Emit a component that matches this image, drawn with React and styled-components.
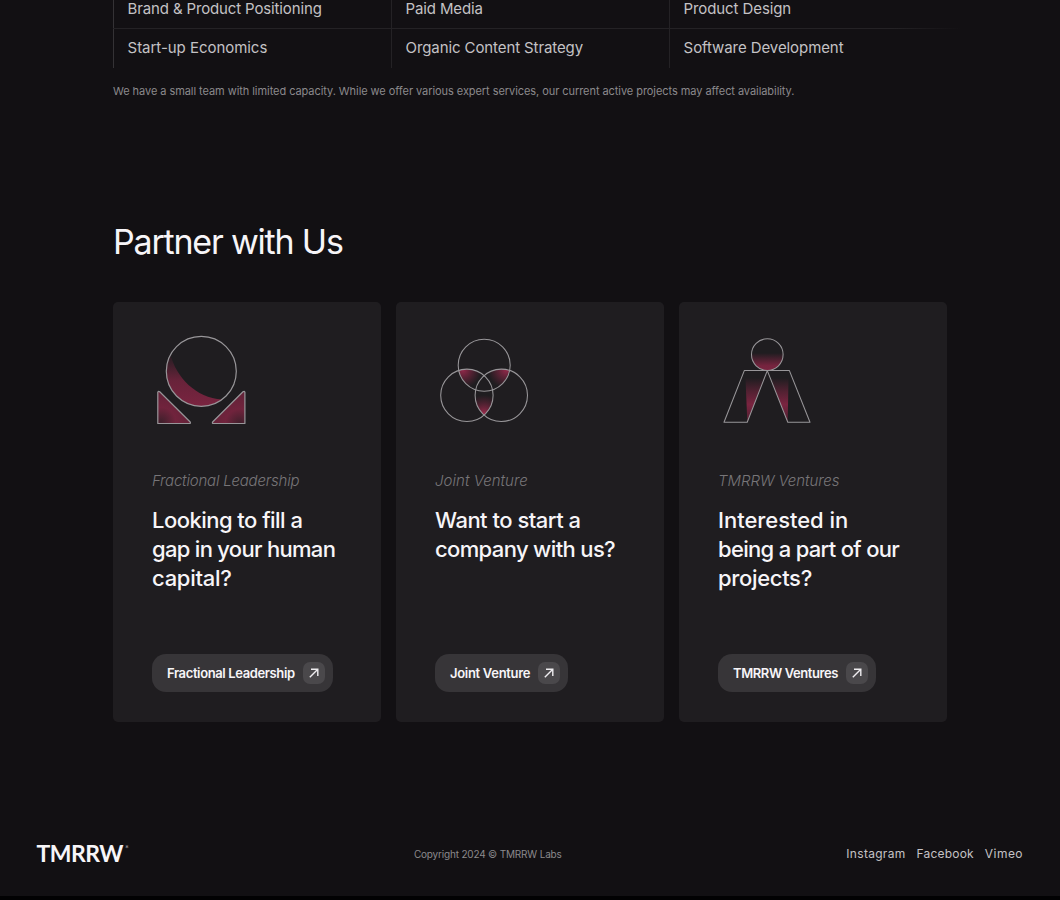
import React from "react";
import styled, { createGlobalStyle, css } from "styled-components";

const colors = {
  background: "#121013",
  card: "#1f1d20",
  button: "#373538",
  buttonIcon: "#4a484b",
  line: "#242225",
  white: "#f7f5f8",
  text: "#c4c2c5",
  muted: "#8b898c",
  faded: "#777578",
  stroke: "#989699",
  red: "#7a2440",
};

const services = [
  [
    { name: "Brand & Product Positioning", track: -0.14 },
    { name: "Paid Media", track: -0.14 },
    { name: "Product Design", track: -0.1 },
  ],
  [
    { name: "Start-up Economics", track: -0.04 },
    { name: "Organic Content Strategy", track: -0.1 },
    { name: "Software Development", track: -0.08 },
  ],
];

const OmegaIcon = () => (
  <IconSvg viewBox="0 0 98 96">
    <defs>
      <linearGradient id="moon" x1="0" y1="0" x2="0" y2="1">
        <stop offset="0" stopColor={colors.red} stopOpacity="0.05" />
        <stop offset="0.5" stopColor={colors.red} stopOpacity="0.8" />
        <stop offset="1" stopColor={colors.red} />
      </linearGradient>
      <radialGradient id="wedgeLeft" cx="0.1" cy="0.95" r="0.9">
        <stop offset="0" stopColor={colors.red} stopOpacity="0.35" />
        <stop offset="0.5" stopColor={colors.red} stopOpacity="0.9" />
        <stop offset="1" stopColor={colors.red} stopOpacity="0.75" />
      </radialGradient>
      <radialGradient id="wedgeRight" cx="0.85" cy="1" r="0.9">
        <stop offset="0" stopColor={colors.red} stopOpacity="0.35" />
        <stop offset="0.5" stopColor={colors.red} stopOpacity="0.9" />
        <stop offset="1" stopColor={colors.red} stopOpacity="0.75" />
      </radialGradient>
    </defs>
    <path d="M18.5 22.5A35 35 0 0 0 70 67.5C44 66 24 45 18.5 22.5Z" fill="url(#moon)" />
    <g stroke={colors.stroke} strokeWidth="1.2" strokeLinejoin="round">
      <circle cx="49.3" cy="39.3" r="35" fill="none" />
      <path d="M5.8 60.2Q6.3 58.6 7.7 59.8L38.2 90Q39 91.5 37.3 91.5H5.8Z" fill="url(#wedgeLeft)" />
      <path d="M92.9 60.2Q92.4 58.6 91 59.8L60.6 90Q59.8 91.5 61.5 91.5H92.9Z" fill="url(#wedgeRight)" />
    </g>
  </IconSvg>
);

const VennIcon = () => (
  <IconSvg viewBox="0 0 98 96">
    <defs>
      <clipPath id="topCircle">
        <circle cx="49.2" cy="33.2" r="26" />
      </clipPath>
      <clipPath id="leftCircle">
        <circle cx="31.9" cy="63.3" r="26.2" />
      </clipPath>
      <radialGradient id="glowLeft" gradientUnits="userSpaceOnUse" cx="28" cy="38" r="18">
        <stop offset="0" stopColor="#92284a" />
        <stop offset="1" stopColor={colors.red} stopOpacity="0" />
      </radialGradient>
      <radialGradient id="glowRight" gradientUnits="userSpaceOnUse" cx="71" cy="38" r="18">
        <stop offset="0" stopColor="#92284a" />
        <stop offset="1" stopColor={colors.red} stopOpacity="0" />
      </radialGradient>
      <radialGradient id="glowBottom" gradientUnits="userSpaceOnUse" cx="49" cy="82" r="19">
        <stop offset="0" stopColor="#9c2a4c" />
        <stop offset="1" stopColor={colors.red} stopOpacity="0" />
      </radialGradient>
    </defs>
    <circle cx="31.9" cy="63.3" r="26.2" fill="url(#glowLeft)" clipPath="url(#topCircle)" />
    <circle cx="66.3" cy="63.3" r="26.2" fill="url(#glowRight)" clipPath="url(#topCircle)" />
    <circle cx="66.3" cy="63.3" r="26.2" fill="url(#glowBottom)" clipPath="url(#leftCircle)" />
    <g fill="none" stroke={colors.stroke} strokeWidth="1.05">
      <circle cx="49.2" cy="33.2" r="26" />
      <circle cx="31.9" cy="63.3" r="26.2" />
      <circle cx="66.3" cy="63.3" r="26.2" />
    </g>
  </IconSvg>
);

const FigureIcon = () => (
  <IconSvg viewBox="0 0 98 96">
    <defs>
      <linearGradient id="head" x1="0" y1="0" x2="0" y2="1">
        <stop offset="0.45" stopColor={colors.red} stopOpacity="0" />
        <stop offset="0.85" stopColor={colors.red} stopOpacity="0.95" />
        <stop offset="1" stopColor={colors.red} />
      </linearGradient>
      <linearGradient id="legs" x1="0" y1="0" x2="0" y2="1">
        <stop offset="0" stopColor={colors.red} stopOpacity="0" />
        <stop offset="0.3" stopColor={colors.red} stopOpacity="0.55" />
        <stop offset="0.6" stopColor={colors.red} />
        <stop offset="1" stopColor={colors.red} stopOpacity="0.5" />
      </linearGradient>
    </defs>
    <circle cx="49.3" cy="22.6" r="15.8" fill="url(#head)" />
    <path d="M27.5 46H46.2L29.3 90Z" fill="url(#legs)" />
    <path d="M52.4 46H70.5L69.7 90Z" fill="url(#legs)" />
    <g fill="none" stroke={colors.stroke} strokeWidth="1.05" strokeLinejoin="round">
      <circle cx="49.3" cy="22.6" r="15.8" />
      <path d="M26.4 38.4H71.3L92 90.2H69.8L49.3 38.6L29.2 90.2H6Z" />
    </g>
  </IconSvg>
);

const ArrowIcon = () => (
  <svg width="10" height="10" viewBox="0 0 10 10" fill="none" stroke="#eeecef" strokeWidth="1.4">
    <path d="M0.8 9.2L8.8 1.2M2 1.2H8.8V8" />
  </svg>
);

const partners = [
  {
    icon: <OmegaIcon />,
    name: "Fractional Leadership",
    nameTrack: -0.2,
    buttonTrack: -0.38,
    lines: [
      { text: "Looking to fill a", track: -0.53 },
      { text: "gap in your human", track: -0.7 },
      { text: "capital?", track: -0.28 },
    ],
  },
  {
    icon: <VennIcon />,
    name: "Joint Venture",
    nameTrack: 0.05,
    buttonTrack: -0.3,
    lines: [
      { text: "Want to start a", track: -0.5 },
      { text: "company with us?", track: -0.64 },
    ],
  },
  {
    icon: <FigureIcon />,
    name: "TMRRW Ventures",
    nameTrack: -0.05,
    buttonTrack: -0.4,
    lines: [
      { text: "Interested in", track: -0.04 },
      { text: "being a part of our", track: -0.69 },
      { text: "projects?", track: -0.33 },
    ],
  },
];

const App = () => {
  return (
    <Page>
      <GlobalStyle />
      <Main>
        <Services>
          {services.map((row) => (
            <ServiceRow key={row[0].name}>
              {row.map((service) => (
                <Service key={service.name} $track={service.track}>
                  {service.name}
                </Service>
              ))}
            </ServiceRow>
          ))}
        </Services>
        <Note>
          We have a small team with limited capacity. While we offer various
          expert services, our current active projects may affect availability.
        </Note>
        <Heading>Partner with Us</Heading>
        <Cards>
          {partners.map((partner) => (
            <Card key={partner.name}>
              {partner.icon}
              <Eyebrow $track={partner.nameTrack}>{partner.name}</Eyebrow>
              <Title>
                {partner.lines.map((line) => (
                  <TitleLine key={line.text} $track={line.track}>
                    {line.text}
                  </TitleLine>
                ))}
              </Title>
              <Button $track={partner.buttonTrack}>
                {partner.name}
                <ButtonIcon>
                  <ArrowIcon />
                </ButtonIcon>
              </Button>
            </Card>
          ))}
        </Cards>
      </Main>
      <Footer>
        <Logo>
          TMRRW<LogoMark>*</LogoMark>
        </Logo>
        <Copyright>Copyright 2024 © TMRRW Labs</Copyright>
        <Links>
          <FooterLink $track={0.3}>Instagram</FooterLink>
          <FooterLink $track={0.2}>Facebook</FooterLink>
          <FooterLink $track={0.45}>Vimeo</FooterLink>
        </Links>
      </Footer>
    </Page>
  );
};

const GlobalStyle = createGlobalStyle`
  * {
    box-sizing: border-box;
  }

  body {
    margin: 0;
    background: ${colors.background};
    font-family: Inter, "Liberation Sans", sans-serif;
  }
`;

const tracking = css`
  letter-spacing: ${({ $track }) => $track || 0}px;
`;

const Page = styled.div`
  display: flex;
  flex-direction: column;
  width: 1060px;
  height: 900px;
  overflow: hidden;
  background: ${colors.background};
  border-bottom: 4px solid #020203;
`;

const Main = styled.main`
  width: 848px;
  margin-left: 113px;
`;

const Services = styled.div`
  margin-top: -12px;
`;

const ServiceRow = styled.div`
  display: grid;
  grid-template-columns: 278px 278px 1fr;
  height: 40px;

  & + & {
    border-top: 1px solid;
    border-image: linear-gradient(90deg, ${colors.line} 92%, transparent) 1;
  }
`;

const Service = styled.div`
  display: flex;
  align-items: center;
  padding-left: 13.6px;
  border-left: 1px solid ${colors.line};
  color: ${colors.text};
  font-size: 15px;
  ${tracking}

  &:first-child {
    border-left-color: #343235;
  }

  ${ServiceRow} + ${ServiceRow} > & {
    padding-bottom: 2px;
  }
`;

const Note = styled.p`
  margin: 15px 0 0;
  color: ${colors.muted};
  font-size: 11px;
  line-height: 16px;
  letter-spacing: -0.062px;
  white-space: nowrap;
`;

const Heading = styled.h2`
  margin: 121px 0 0;
  color: ${colors.white};
  font-size: 34px;
  font-weight: 400;
  line-height: 44px;
  letter-spacing: -1.2px;
`;

const Cards = styled.div`
  display: grid;
  grid-template-columns: repeat(3, 268px);
  gap: 15px;
  margin-top: 38px;
`;

const Card = styled.div`
  display: flex;
  flex-direction: column;
  align-items: flex-start;
  height: 420px;
  padding: 30px 30px 30px 39px;
  border-radius: 5px;
  background: ${colors.card};
`;

const IconSvg = styled.svg`
  width: 98px;
  height: 96px;
`;

const Eyebrow = styled.div`
  margin-top: 43px;
  color: ${colors.faded};
  font-size: 15px;
  font-style: italic;
  font-weight: 300;
  line-height: 20px;
  ${tracking}
`;

const Title = styled.h3`
  margin: 15px 0 0;
  color: ${colors.white};
  font-size: 22px;
  font-weight: 500;
  line-height: 29px;
`;

const TitleLine = styled.span`
  display: block;
  white-space: nowrap;
  ${tracking}
`;

const Button = styled.button`
  display: flex;
  align-items: center;
  gap: 8px;
  height: 38px;
  margin-top: auto;
  padding: 0 8px 0 15px;
  border: 0;
  border-radius: 14px;
  background: ${colors.button};
  color: ${colors.white};
  font-family: inherit;
  font-size: 13px;
  font-weight: 600;
  white-space: nowrap;
  ${tracking}
`;

const ButtonIcon = styled.span`
  display: flex;
  align-items: center;
  justify-content: center;
  width: 22px;
  height: 22px;
  border-radius: 7px;
  background: ${colors.buttonIcon};
`;

const Footer = styled.footer`
  display: grid;
  grid-template-columns: 1fr auto 1fr;
  align-items: center;
  height: 40px;
  margin-top: 111px;
  padding: 0 37px 0 36.5px;
`;

const Logo = styled.div`
  display: flex;
  color: ${colors.white};
  font-family: Lato, sans-serif;
  font-size: 23px;
  font-weight: 700;
  line-height: 28px;
  letter-spacing: -0.5px;
`;

const LogoMark = styled.span`
  margin-left: 2px;
  color: ${colors.muted};
  font-size: 9px;
  line-height: 20px;
`;

const Copyright = styled.div`
  padding: 2px 84px 0 0;
  color: ${colors.muted};
  font-size: 10px;
  letter-spacing: -0.18px;
`;

const Links = styled.div`
  display: flex;
  justify-content: flex-end;
  gap: 11px;
`;

const FooterLink = styled.a`
  color: ${colors.text};
  font-size: 12px;
  ${tracking}
`;

export default App;
